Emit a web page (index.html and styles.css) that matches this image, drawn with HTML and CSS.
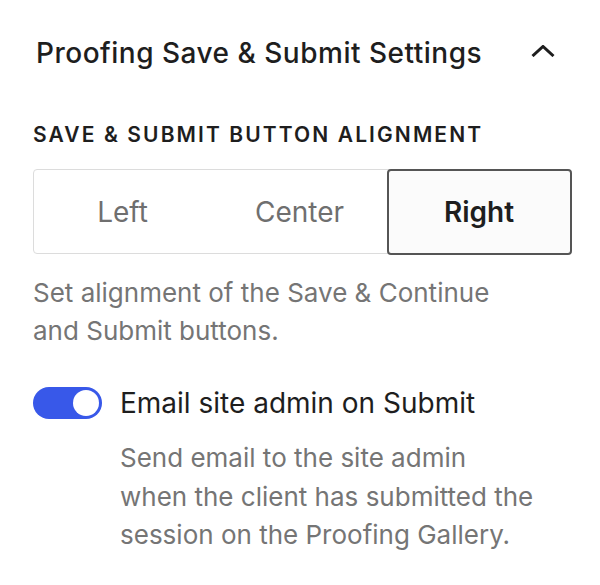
FILE: index.html
```html
<!DOCTYPE html>
<html>
<head>
<meta charset="utf-8">
<link rel="stylesheet" href="styles.css">
</head>
<body>
<div class="panel">
  <div class="panel-header">
    <h2 class="panel-title">Proofing Save &amp; Submit Settings</h2>
    <svg class="chevron" width="24" height="12" viewBox="0 0 24 12"><path d="M1.5 11 L12 1.5 L22.5 11" fill="none" stroke="#1e1e1e" stroke-width="3"/></svg>
  </div>
  <div class="field-label">SAVE &amp; SUBMIT BUTTON ALIGNMENT</div>
  <div class="segmented">
    <div class="seg">Left</div>
    <div class="seg">Center</div>
    <div class="seg seg-active">Right</div>
  </div>
  <p class="help">Set alignment of the Save &amp; Continue<br>and Submit buttons.</p>
  <div class="toggle-row">
    <span class="toggle"><span class="thumb"></span></span>
    <span class="toggle-label">Email site admin on Submit</span>
  </div>
  <p class="help toggle-help">Send email to the site admin<br>when the client has submitted the<br>session on the Proofing Gallery.</p>
</div>
</body>
</html>
```
FILE: styles.css
```css
html, body {
  margin: 0;
  padding: 0;
  background: #ffffff;
}
body {
  font-family: Inter, "Noto Sans", "Liberation Sans", sans-serif;
  color: #1e1e1e;
}
.panel {
  padding: 0 29px 0 33px;
}
.panel-header {
  display: flex;
  align-items: center;
  justify-content: space-between;
  height: 106px;
  padding-left: 3px;
  padding-right: 16px;
}
.panel-title {
  margin: 0;
  font-size: 28px;
  font-weight: 500;
  letter-spacing: 0.5px;
  white-space: nowrap;
}
.chevron {
  display: block;
  margin-top: -4px;
}
.field-label {
  font-size: 21px;
  font-weight: 600;
  line-height: 24px;
  letter-spacing: 2.1px;
  margin-top: 17px;
  white-space: nowrap;
}
.segmented {
  display: flex;
  margin-top: 22px;
  height: 85px;
  border: 1.5px solid #dcdcdc;
  border-radius: 4px;
  box-sizing: border-box;
}
.seg {
  flex: 1;
  display: flex;
  align-items: center;
  justify-content: center;
  font-size: 28px;
  color: #6f6f6f;
}
.seg-active {
  flex: 0 0 181px;
  margin: -1.5px;
  border: 2px solid #555555;
  border-radius: 4px;
  background: #fbfbfb;
  color: #1e1e1e;
  font-weight: 600;
}
.help {
  margin: 20px 0 0;
  font-size: 26px;
  line-height: 38px;
  color: #757575;
  white-space: nowrap;
}
.toggle-row {
  display: flex;
  align-items: center;
  gap: 18px;
  margin-top: 37px;
}
.toggle {
  position: relative;
  display: block;
  width: 69px;
  height: 32px;
  border-radius: 16px;
  background: #3858e9;
  flex: none;
}
.thumb {
  position: absolute;
  right: 3px;
  top: 3px;
  width: 26px;
  height: 26px;
  border-radius: 50%;
  background: #ffffff;
}
.toggle-label {
  font-size: 28px;
  line-height: 32px;
  color: #1e1e1e;
  white-space: nowrap;
}
.toggle-help {
  margin-top: 20px;
  line-height: 38.5px;
  padding-left: 87px;
}
```
